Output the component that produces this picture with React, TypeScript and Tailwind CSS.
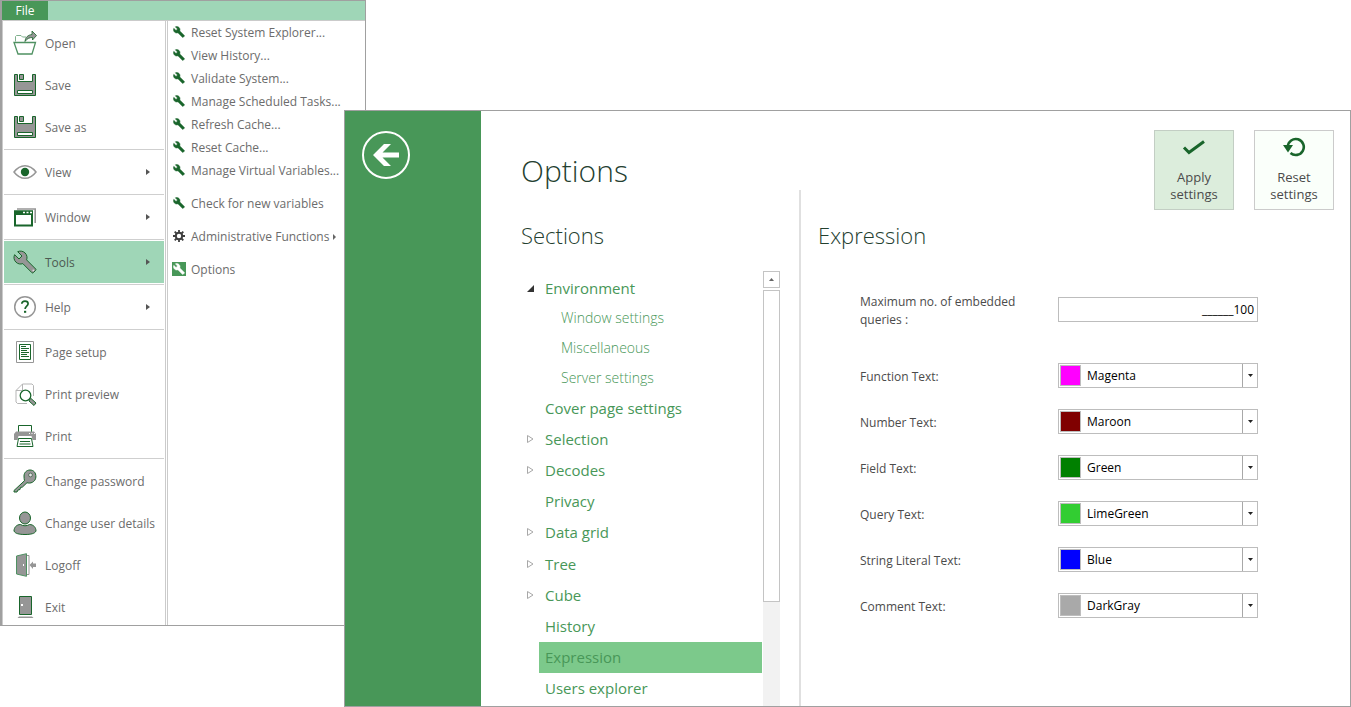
import React from 'react';

const WRENCH =
  'M22.7 19l-9.1-9.1c.9-2.3.4-5-1.5-6.9-2-2-5-2.4-7.4-1.3L9 6 6 9 1.6 4.7C.4 7.1.9 10.1 2.9 12.1c1.9 1.9 4.6 2.4 6.9 1.5l9.1 9.1c.4.4 1 .4 1.4 0l2.3-2.3c.5-.4.5-1.1.1-1.4z';

const DARK = '#19652b';
const GREY = '#969696';

const Svg: React.FC<{ children: React.ReactNode }> = ({ children }) => (
  <svg viewBox="0 0 24 24" className="h-6 w-6 shrink-0 overflow-visible" fill="none" aria-hidden="true">
    {children}
  </svg>
);

const OpenIcon = () => (
  <Svg>
    <path d="M2.500 10.500V5.500l1-1H8l1.500 1.500H13" stroke="#7fb08d" />
    <path d="M1 11.500h21.500l-3.500 11.500H5z" stroke="#4f9162" strokeWidth="1.300" />
    <path d="M12 10.500c.5-4.500 3-6.500 7-7V0l4.500 4.500L19.500 9V6.500c-3 0-5.500 1-7.500 4z" fill={GREY} stroke={DARK} strokeWidth=".8" />
  </Svg>
);

const SaveIcon = () => (
  <Svg>
    <path d="M1.500 1.500h3v7h15v-7h3v21h-21z" fill={GREY} stroke={DARK} />
    <path d="M6.500 1.500h4v5h-4z" fill={GREY} stroke={DARK} />
    <path d="M4.500 17.500h15v3h-15z" fill="#fff" stroke={DARK} />
  </Svg>
);

const ViewIcon = () => (
  <Svg>
    <path d="M1 12C4 8 7.500 5.700 12 5.700S20 8 23 12c-3 4-6.500 6.300-11 6.300S4 16 1 12z" stroke={GREY} strokeWidth="1.500" />
    <circle cx="12" cy="12" r="4.200" fill={DARK} />
  </Svg>
);

const WindowIcon = () => (
  <Svg>
    <path d="M4 4h18.200v14" stroke={GREY} strokeWidth="1.600" />
    <path d="M2 6.500h17v14H2z" fill="#fff" stroke={DARK} strokeWidth="2" />
    <path d="M1 5.500h19V10H1z" fill={DARK} />
    <path d="M10 7.500h2M13.500 7.500h2M17 7.500h2" stroke="#fff" strokeWidth="1.500" />
  </Svg>
);

const ToolsIcon = () => (
  <Svg>
    <path d={WRENCH} fill={GREY} stroke={DARK} />
    <circle cx="20.300" cy="20.300" r=".9" fill="#ddd" />
  </Svg>
);

const HelpIcon = () => (
  <Svg>
    <circle cx="12" cy="12" r="10.300" stroke={GREY} strokeWidth="1.500" />
    <path d="M8.800 8.800c.1-1.700 1.400-2.700 3.200-2.700s3.100 1 3.100 2.600c0 2.400-3 2.500-3 5.300" stroke={DARK} strokeWidth="1.700" />
    <path d="M11 15.800h2.200v2H11z" fill={DARK} />
  </Svg>
);

const PageSetupIcon = () => (
  <Svg>
    <path d="M3.500 1.500h17v21h-17z" stroke={GREY} />
    <path d="M6.500 4.500h11v15h-11z" stroke={DARK} />
    <path d="M8 6.500h5M8 8.500h8M8 10.500h6M8 12.500h8M8 14.500h6M8 16.500h8" stroke={DARK} />
  </Svg>
);

const PreviewIcon = () => (
  <Svg>
    <path d="M20.500 14V3.500l-1.500-1.500H9.500l-6.500 6.500V20l1.500 1.500H14M9.500 2v6.500H3" stroke="#b5b5b5" />
    <circle cx="12.500" cy="13.500" r="5.300" fill="#fff" stroke={DARK} strokeWidth="1.300" />
    <path d="M16.500 17.500l1.500-1 5 4.500-2 2.500-5-4.500z" fill={GREY} stroke={DARK} />
  </Svg>
);

const PrintIcon = () => (
  <Svg>
    <path d="M5.500 8.500v-7h13v7" stroke={DARK} />
    <path d="M1 10l2-2.500h18l2 2.500v6h-3.500l-1-4h-13l-1 4H1z" fill={GREY} />
    <path d="M16 9.500h1M18.500 9.500h1M21 9.500h1" stroke="#fff" />
    <path d="M5.500 14.500h13l1.500 8H4z" fill="#fff" stroke={DARK} />
    <path d="M7 17.500h10M6.500 20h11" stroke={DARK} />
  </Svg>
);

const KeyIcon = () => (
  <Svg>
    <path d="M11.500 11.700L1 21.500v1.500h3l1-2 2-.5.500-2 2-.5 4.500-4.300c3 1.300 8.500-.5 8.900-5.700C23 3.500 20.500 1 17 1s-6 2.800-6 6c0 1.500.200 3.500.5 4.700z" fill={GREY} stroke={DARK} />
    <circle cx="17.500" cy="6" r="1.900" fill="#e4e4e4" stroke="#55705c" />
  </Svg>
);

const UserIcon = () => (
  <Svg>
    <path d="M1 20c0-3.500 2.500-6.500 6.500-6.500 2.500 1.700 6.500 1.700 9 0 4 0 6.500 3 6.500 6.500-1 2.500-5 3.500-11 3.500S2 22.500 1 20z" fill={GREY} stroke={DARK} />
    <ellipse cx="12" cy="7" rx="5.500" ry="6" fill={GREY} stroke={DARK} />
  </Svg>
);

const LogoffIcon = () => (
  <Svg>
    <path d="M13 2.500h3v19h-3" stroke={GREY} />
    <path d="M3.500 3L13.500.7v22.600L3.500 21z" fill={GREY} stroke="#4f9162" />
    <path d="M10 11h1v2h-1z" fill="#fff" />
    <path d="M16.500 12l3.500-3.500V10.500h3v3.500h-3v2z" fill={GREY} />
  </Svg>
);

const ExitIcon = () => (
  <Svg>
    <path d="M6.500 1.500h12v18h-12z" fill={GREY} stroke={DARK} />
    <path d="M8 9h2v2H8z" fill="#fff" />
    <path d="M6 21.500h13l1.500 1.500h-16z" fill={GREY} />
  </Svg>
);

interface MenuEntry {
  label: string;
  icon: React.FC;
  arrow?: boolean;
  active?: boolean;
}

const menuGroups: MenuEntry[][] = [
  [
    { label: 'Open', icon: OpenIcon },
    { label: 'Save', icon: SaveIcon },
    { label: 'Save as', icon: SaveIcon },
  ],
  [{ label: 'View', icon: ViewIcon, arrow: true }],
  [{ label: 'Window', icon: WindowIcon, arrow: true }],
  [{ label: 'Tools', icon: ToolsIcon, arrow: true, active: true }],
  [{ label: 'Help', icon: HelpIcon, arrow: true }],
  [
    { label: 'Page setup', icon: PageSetupIcon },
    { label: 'Print preview', icon: PreviewIcon },
    { label: 'Print', icon: PrintIcon },
  ],
  [
    { label: 'Change password', icon: KeyIcon },
    { label: 'Change user details', icon: UserIcon },
    { label: 'Logoff', icon: LogoffIcon },
    { label: 'Exit', icon: ExitIcon },
  ],
];

const SmallWrench = () => (
  <svg viewBox="0 0 24 24" className="h-3 w-3" fill={DARK} stroke={DARK} aria-hidden="true">
    <path d={WRENCH} />
  </svg>
);

const Gear = () => (
  <svg viewBox="0 0 12 12" className="h-3 w-3" fill="none" stroke="#3f3f3f" aria-hidden="true">
    <circle cx="6" cy="6" r="3.200" strokeWidth="2" />
    <path d="M6 0v2.500M6 9.500V12M0 6h2.500M9.500 6H12M1.700 1.700l1.800 1.800M8.500 8.500l1.800 1.800M10.300 1.700L8.500 3.500M3.500 8.500l-1.800 1.800" strokeWidth="1.800" />
  </svg>
);

const OptionsBadge = () => (
  <span className="flex h-[14px] w-[14px] items-center justify-center bg-[#489758]">
    <svg viewBox="0 0 24 24" className="h-3 w-3" fill="#fff" stroke="#fff" aria-hidden="true">
      <path d={WRENCH} />
    </svg>
  </span>
);

const toolGroups: { label: string; icon: React.FC; arrow?: boolean }[][] = [
  [
    { label: 'Reset System Explorer...', icon: SmallWrench },
    { label: 'View History...', icon: SmallWrench },
    { label: 'Validate System...', icon: SmallWrench },
    { label: 'Manage Scheduled Tasks...', icon: SmallWrench },
    { label: 'Refresh Cache...', icon: SmallWrench },
    { label: 'Reset Cache...', icon: SmallWrench },
    { label: 'Manage Virtual Variables...', icon: SmallWrench },
  ],
  [{ label: 'Check for new variables', icon: SmallWrench }],
  [{ label: 'Administrative Functions', icon: Gear, arrow: true }],
  [{ label: 'Options', icon: OptionsBadge }],
];

const FileMenu: React.FC = () => (
  <div className="flex w-[366px] shrink-0 flex-col overflow-hidden border border-l-2 border-[#a0a0a0] bg-white text-[12px] text-[#6c6c6c]">
    <div className="flex h-5 border-b border-[#cbcbcb] bg-[#9fd6b7]">
      <button type="button" className="w-[46px] bg-[#489758] text-[12px] leading-4 text-white">File</button>
    </div>
    <div className="flex">
      <nav className="-mb-[3px] w-[164px] border-x border-[#cbcbcb] px-px pt-px" aria-label="File">
        {menuGroups.map((group, i) => (
          <div key={i} className={i > 0 ? 'pt-[3px]' : ''}>
            {i > 0 && <hr className="-mt-[2px] mb-px border-[#cfcfcf]" />}
            {group.map((item) => (
              <button
                key={item.label}
                type="button"
                className={`flex h-[42px] w-full items-center gap-2 pr-[14px] pl-[9px] text-left ${item.active ? 'bg-[#9fd6b7] text-[#4c5a52]' : ''}`}
              >
                <item.icon />
                <span className="grow pt-[2px] whitespace-nowrap">{item.label}</span>
                {item.arrow && (
                  <svg viewBox="0 0 4 6" className="h-[6px] w-1 shrink-0" fill="#555" aria-hidden="true">
                    <path d="M0 0l4 3-4 3z" />
                  </svg>
                )}
              </button>
            ))}
          </div>
        ))}
      </nav>
      <div className="ml-px grow border-l border-[#cbcbcb]">
        {toolGroups.map((group, i) => (
          <div key={i} className={i > 0 ? 'pt-[10px]' : ''}>
            {group.map((item) => (
              <button key={item.label} type="button" className="flex h-[23px] w-full items-center pl-[3px] text-left whitespace-nowrap">
                <span className="mr-1 flex w-4 shrink-0 justify-center pb-[2px]">
                  <item.icon />
                </span>
                {item.label}
                {item.arrow && (
                  <svg viewBox="0 0 3 6" className="ml-1 h-[6px] w-[3px]" fill="#666" aria-hidden="true">
                    <path d="M0 0l3 3-3 3z" />
                  </svg>
                )}
              </button>
            ))}
          </div>
        ))}
      </div>
    </div>
  </div>
);

const environment = ['Window settings', 'Miscellaneous', 'Server settings'];

const sections = [
  { label: 'Cover page settings' },
  { label: 'Selection', expandable: true },
  { label: 'Decodes', expandable: true },
  { label: 'Privacy' },
  { label: 'Data grid', expandable: true },
  { label: 'Tree', expandable: true },
  { label: 'Cube', expandable: true },
  { label: 'History' },
  { label: 'Expression', active: true },
  { label: 'Users explorer' },
];

const SectionTree: React.FC = () => (
  <div className="flex min-h-0 grow pr-[19px]">
    <div className="mr-px flex grow flex-col text-[15px] text-[#489758]">
      <div className="flex h-[31px] items-center pt-[3px]">
        <span className="w-[18px] pl-[6px]">
          <svg viewBox="0 0 7 7" className="h-[7px] w-[7px]" aria-hidden="true">
            <path d="M7 0v7H0z" fill="#333" />
          </svg>
        </span>
        <button type="button" className="pl-[6px]">Environment</button>
      </div>
      {environment.map((label) => (
        <button key={label} type="button" className="h-[30px] pt-px pl-10 text-left text-[14px] font-light">
          {label}
        </button>
      ))}
      <ul className="grid grow auto-rows-fr pb-[2px]">
        {sections.map((section) => (
          <li key={section.label} className="flex items-stretch">
            <span className="flex w-[18px] shrink-0 items-center pl-[6px]">
              {section.expandable && (
                <svg viewBox="0 0 7 8" className="h-2 w-[7px]" fill="none" stroke="#a8a8a8" aria-hidden="true">
                  <path d="M.5.500l5.500 3.500L.5 7.500z" />
                </svg>
              )}
            </span>
            <button type="button" className={`grow pl-[6px] text-left leading-6 ${section.active ? 'bg-[#7cc98b]' : ''}`}>
              {section.label}
            </button>
          </li>
        ))}
      </ul>
    </div>
    <div className="flex w-[17px] flex-col gap-[2px] bg-white">
      <button type="button" aria-label="Scroll up" className="flex h-[17px] shrink-0 items-center justify-center border border-[#c4c4c4]">
        <svg viewBox="0 0 5 3" className="h-[3px] w-[5px]" fill="#666" aria-hidden="true">
          <path d="M2.500 0L5 3H0z" />
        </svg>
      </button>
      <div className="grow bg-[#f2f2f2]">
        <div className="h-3/4 border border-[#c4c4c4] bg-white" />
      </div>
    </div>
  </div>
);

const colours = [
  { label: 'Function Text:', value: 'Magenta', swatch: 'bg-[#ff00ff]' },
  { label: 'Number Text:', value: 'Maroon', swatch: 'bg-[#800000]' },
  { label: 'Field Text:', value: 'Green', swatch: 'bg-[#008000]' },
  { label: 'Query Text:', value: 'LimeGreen', swatch: 'bg-[#32cd32]' },
  { label: 'String Literal Text:', value: 'Blue', swatch: 'bg-[#0000ff]' },
  { label: 'Comment Text:', value: 'DarkGray', swatch: 'bg-[#a9a9a9]' },
];

const ExpressionForm: React.FC = () => (
  <form className="flex flex-col pl-[42px] text-[12px] text-[#4b4b4b]">
    <div className="mb-[25px] flex h-9 items-center">
      <label htmlFor="max-queries" className="w-[198px] pt-1 pr-4 leading-[18px]">
        Maximum no. of embedded queries :
      </label>
      <input
        id="max-queries"
        defaultValue="______100"
        className="h-[25px] w-[200px] border border-[#bdbdbd] px-[3px] text-right text-black"
      />
    </div>
    {colours.map((colour) => (
      <div key={colour.label} className="flex h-[46px] items-center">
        <label htmlFor={colour.value} className="w-[198px] pt-[3px]">{colour.label}</label>
        <div className="flex h-[25px] w-[200px] items-center border border-[#bdbdbd] pl-px">
          <span className={`h-[21px] w-[21px] shrink-0 border border-[#bdbdbd] ${colour.swatch}`} />
          <select id={colour.value} defaultValue={colour.value} className="h-full min-w-0 grow appearance-none pt-[2px] pl-[6px] text-black">
            {colours.map((option) => (
              <option key={option.value}>{option.value}</option>
            ))}
          </select>
          <span className="flex h-full w-[15px] items-center justify-center border-l border-[#a8a8a8]">
            <svg viewBox="0 0 5 3" className="h-[3px] w-[5px]" fill="#222" aria-hidden="true">
              <path d="M0 0h5L2.500 3z" />
            </svg>
          </span>
        </div>
      </div>
    ))}
  </form>
);

const OptionsWindow: React.FC = () => (
  <div className="z-10 mt-[110px] -ml-[22px] flex h-[calc(100vh-110px)] min-h-[597px] grow border border-[#a0a0a0] bg-white">
    <aside className="w-[136px] shrink-0 bg-[#489758] pt-5 pl-[17px]">
      <button type="button" aria-label="Back">
        <svg viewBox="0 0 48 48" className="h-12 w-12" aria-hidden="true">
          <circle cx="24" cy="24" r="23" fill="none" stroke="#fff" strokeWidth="2" />
          <path d="M11 24L22 13h7l-8.500 8.500H37v5H20.500L29 35h-7z" fill="#fff" />
        </svg>
      </button>
    </aside>
    <div className="flex w-[320px] shrink-0 flex-col">
      <h1 className="h-[79px] pt-10 pl-10 text-[30px] leading-10 font-light text-[#24402f]">Options</h1>
      <div className="flex min-h-0 grow flex-col border-r-2 border-[#e0e0e0] pl-10">
        <h2 className="h-[81px] pt-[29px] text-[22px] leading-8 font-light text-[#24402f]">Sections</h2>
        <SectionTree />
      </div>
    </div>
    <main className="grow pl-[17px]">
      <div className="flex justify-end gap-5 pt-[19px] pr-4 text-[13px] leading-[17px] text-[#4b4b4b]">
        <button type="button" className="flex h-20 w-20 flex-col items-center border border-[#c3cec4] bg-[#dceddc] pt-[5px]">
          <svg viewBox="0 0 24 24" className="mb-[9px] h-6 w-6" fill="none" stroke={DARK} strokeWidth="3" aria-hidden="true">
            <path d="M2 11.500l5 5L22 5.500" />
          </svg>
          Apply settings
        </button>
        <button type="button" className="flex h-20 w-20 flex-col items-center border border-[#cbcbcb] bg-[#fafffa] pt-[5px]">
          <svg viewBox="0 0 24 24" className="mb-[9px] h-6 w-6" fill="none" aria-hidden="true">
            <path d="M5.800 10.500A8 8 0 1 1 8.500 17" stroke={DARK} strokeWidth="2.600" />
            <path d="M1 9h10L6 16.500z" fill={DARK} />
          </svg>
          Reset settings
        </button>
      </div>
      <h2 className="mb-10 pt-[9px] text-[22px] leading-8 font-light text-[#24402f]">Expression</h2>
      <ExpressionForm />
    </main>
  </div>
);

const App: React.FC = () => {
  return (
    <div className="flex min-h-screen items-start bg-white font-['Open_Sans','Noto_Sans',sans-serif]">
      <FileMenu />
      <OptionsWindow />
    </div>
  );
};

export default App;
